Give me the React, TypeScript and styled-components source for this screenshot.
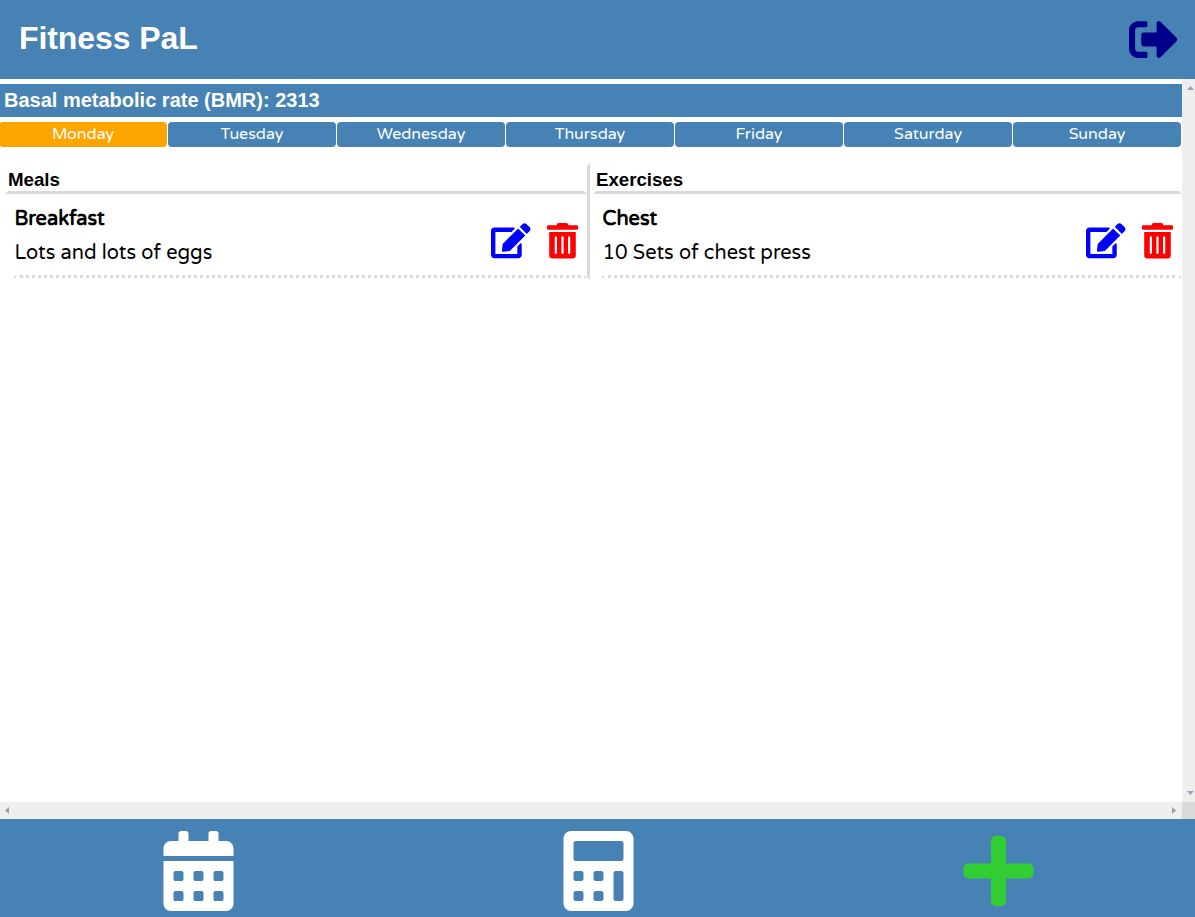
import React from 'react';
import styled, { createGlobalStyle } from 'styled-components';
import { FaSignOutAlt, FaEdit, FaTrashAlt, FaCalendarAlt, FaCalculator, FaPlus } from 'react-icons/fa';

const round = `'Varela Round', 'Noto Sans', sans-serif`;
const plain = `'Liberation Sans', Arial, sans-serif`;

const GlobalStyle = createGlobalStyle`
  * { box-sizing: border-box; }
  body { margin: 0; background: #fff; overflow: hidden; }
  h1, h2, h3, h4, p { margin: 0; }
  svg { display: block; }
`;

const Page = styled.div`
  display: flex;
  flex-direction: column;
  width: 1195px;
  height: 917px;
  overflow: hidden;
  font-family: ${round};
  color: #000;
`;

const Header = styled.header`
  flex: 0 0 79px;
  display: flex;
  align-items: center;
  justify-content: space-between;
  padding: 0 17px 0 19px;
  background: steelblue;
  color: darkblue;
`;

const Title = styled.h1`
  font: bold 32px/36px ${plain};
  letter-spacing: -0.08px;
  color: #fff;
  padding-bottom: 3px;
`;

const Viewport = styled.main`
  flex: 0 0 740px;
  display: grid;
  grid-template-columns: 1182px 13px;
  grid-template-rows: 723px 17px;
`;

const Content = styled.div`
  overflow: hidden;
  padding-top: 5px;
`;

const RateBar = styled.h2`
  height: 33px;
  padding-left: 4px;
  background: steelblue;
  color: #fff;
  font: bold 20px/33px ${plain};
`;

const Days = styled.nav`
  display: flex;
  gap: 1px;
  margin: 5px 0 0 -1px;
`;

const Day = styled.button<{ $active?: boolean }>`
  flex: 0 0 168px;
  height: 25px;
  padding: 0 0 1px;
  border: 0;
  border-radius: 4px;
  background: ${p => (p.$active ? 'orange' : 'steelblue')};
  color: #fff;
  font: 16px/24px ${round};
`;

const Columns = styled.div`
  display: flex;
  margin-top: 16px;
`;

const Column = styled.section<{ $divided?: boolean }>`
  flex: 0 0 ${p => (p.$divided ? 590 : 592)}px;
  height: 117px;
  border: 3px solid #fff;
  border-right: ${p => (p.$divided ? '3px solid #d9d9d9' : '0')};
  padding-left: ${p => (p.$divided ? 2 : 0)}px;
`;

const ColumnTitle = styled.h3`
  height: 28px;
  border: 3px solid #fff;
  border-bottom-color: #d9d9d9;
  border-top: 0;
  font: bold 18.72px/27px ${plain};
  letter-spacing: -0.04px;
`;

const Entry = styled.article`
  display: flex;
  justify-content: space-between;
  height: 84px;
  margin-left: 7.5px;
  border: 3px solid #fff;
  border-top: 0;
  border-bottom: 3px dotted #d9d9d9;
`;

const EntryText = styled.div`
  padding-top: 9px;
  margin-left: -1px;
`;

const EntryName = styled.h4`
  font: bold 20px/33px ${round};
`;

const EntryNote = styled.p`
  font: 20px/34px ${round};
`;

const Actions = styled.div`
  display: flex;
  gap: 16.5px;
  padding: 29px 6px 0 0;
`;

const EditIcon = styled(FaEdit)`
  width: 39.5px;
  height: 35.5px;
  color: blue;
`;

const TrashIcon = styled(FaTrashAlt)`
  width: 31px;
  height: 35.5px;
  color: red;
`;

const ScrollTrack = styled.div<{ $vertical?: boolean }>`
  display: flex;
  flex-direction: ${p => (p.$vertical ? 'column' : 'row')};
  align-items: ${p => (p.$vertical ? 'flex-end' : 'center')};
  justify-content: space-between;
  padding: ${p => (p.$vertical ? '7px 1px' : '0 6px 0 5px')};
  background: #efefef;
`;

const ScrollCorner = styled.div`
  background: #d9d9d9;
`;

const Footer = styled.footer`
  flex: 0 0 98px;
  display: grid;
  grid-template-columns: repeat(3, 400px);
  place-items: center;
  padding-top: 6px;
  margin-left: -2px;
  background: steelblue;
  color: #fff;

  svg {
    width: 71px;
    height: 80px;
  }
`;

const arrows = {
  up: { w: 7, h: 4, d: 'M3.5 0L7 4H0z' },
  down: { w: 7, h: 4, d: 'M0 0H7L3.5 4z' },
  left: { w: 4, h: 7, d: 'M4 0V7L0 3.5z' },
  right: { w: 4, h: 7, d: 'M0 0L4 3.5L0 7z' },
};

function Arrow({ to }: { to: keyof typeof arrows }) {
  const { w, h, d } = arrows[to];
  return (
    <svg width={w} height={h} viewBox={`0 0 ${w} ${h}`}>
      <path d={d} fill="#a59bb3" />
    </svg>
  );
}

interface PlanProps {
  title: string;
  name: string;
  note: string;
  divided?: boolean;
}

function Plan({ title, name, note, divided }: PlanProps) {
  return (
    <Column $divided={divided}>
      <ColumnTitle>{title}</ColumnTitle>
      <Entry>
        <EntryText>
          <EntryName>{name}</EntryName>
          <EntryNote>{note}</EntryNote>
        </EntryText>
        <Actions>
          <EditIcon />
          <TrashIcon />
        </Actions>
      </Entry>
    </Column>
  );
}

const days = ['Monday', 'Tuesday', 'Wednesday', 'Thursday', 'Friday', 'Saturday', 'Sunday'];

export default function App() {
  return (
    <Page>
      <GlobalStyle />
      <Header>
        <Title>Fitness PaL</Title>
        <FaSignOutAlt size={49} />
      </Header>
      <Viewport>
        <Content>
          <RateBar>Basal metabolic rate (BMR): 2313</RateBar>
          <Days>
            {days.map((day, i) => (
              <Day key={day} $active={i === 0}>{day}</Day>
            ))}
          </Days>
          <Columns>
            <Plan divided title="Meals" name="Breakfast" note="Lots and lots of eggs" />
            <Plan title="Exercises" name="Chest" note="10 Sets of chest press" />
          </Columns>
        </Content>
        <ScrollTrack $vertical>
          <Arrow to="up" />
          <Arrow to="down" />
        </ScrollTrack>
        <ScrollTrack>
          <Arrow to="left" />
          <Arrow to="right" />
        </ScrollTrack>
        <ScrollCorner />
      </Viewport>
      <Footer>
        <FaCalendarAlt />
        <FaCalculator />
        <FaPlus color="limegreen" />
      </Footer>
    </Page>
  );
}
